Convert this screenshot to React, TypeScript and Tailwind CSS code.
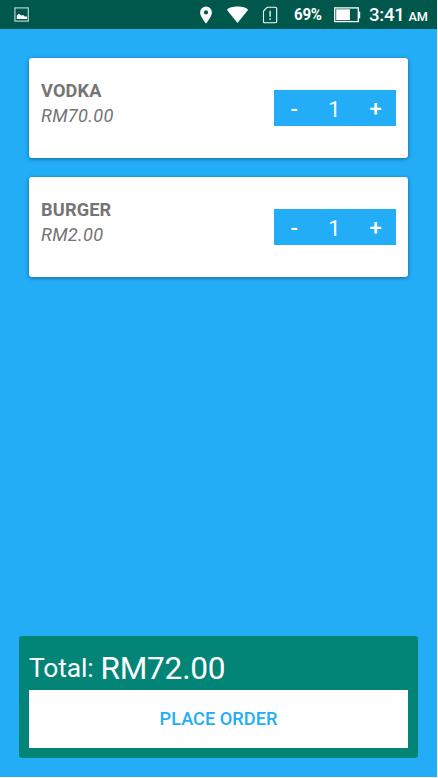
type Item = { name: string; price: string; quantity: number };

const items: Item[] = [
  { name: 'VODKA', price: 'RM70.00', quantity: 1 },
  { name: 'BURGER', price: 'RM2.00', quantity: 1 },
];

function StatusBar() {
  return (
    <header className="flex h-[29px] shrink-0 items-center bg-[#00574b] text-white">
      <svg className="ml-[14px] h-[15px] w-[15px] shrink-0" viewBox="0 0 15 15" fill="none">
        <rect x="0.9" y="0.9" width="13.4" height="13.2" stroke="#b9d3cf" strokeWidth="1.2" />
        <path d="M2.8 12V8.4L4.8 6.8 7.2 8.6l2-.5L10.7 9.6l2.3-.2V12Z" fill="white" />
      </svg>
      <svg className="ml-[171px] h-[18px] w-[12px] shrink-0" viewBox="0 0 12 18" fill="white">
        <path fillRule="evenodd" d="M6 .5A5.8 5.8 0 0 0 .1 6.4C.1 10.7 6 17.4 6 17.4s5.9-6.7 5.9-11A5.8 5.8 0 0 0 6 .5Zm0 3.8a2.1 2.1 0 1 1 0 4.2 2.1 2.1 0 0 1 0-4.2Z" />
      </svg>
      <svg className="ml-[15px] h-[17px] w-[22px] shrink-0" viewBox="0 0 22 17" fill="white">
        <path d="M0 3.9C3-.5 18-.5 21 3.9L10.5 17Z" />
      </svg>
      <svg className="ml-[13px] h-[18px] w-[16px] shrink-0" viewBox="0 0 16 18" fill="none" stroke="white">
        <path d="M5.2 1.2h8.3q1.2 0 1.2 1.2v13.2q0 1.2-1.2 1.2H2.7q-1.2 0-1.2-1.2V5Z" strokeWidth="1.1" />
        <path d="M8.1 4.8v6M8.1 12.2v1.7" strokeWidth="1.3" />
      </svg>
      <span className="ml-[16px] w-[28px] whitespace-nowrap pt-px text-[16.8px] font-bold tracking-[-0.3px]">
        <span className="inline-block origin-left scale-x-[0.9]">69%</span>
      </span>
      <svg className="ml-[12px] h-[16px] w-[27px] shrink-0" viewBox="0 0 27 16">
        <rect x="0.7" y="0.9" width="23.6" height="13.7" fill="none" stroke="white" strokeWidth="1.3" />
        <rect x="2.2" y="2.3" width="13.8" height="10.8" fill="white" />
        <path d="M24.5 4.5h1.7v6.8h-1.7Z" fill="white" />
      </svg>
      <span className="ml-[8px] flex items-baseline whitespace-nowrap pt-[3px] font-medium">
        <span className="text-[18.6px] tracking-[-0.25px]">3:41</span>
        <span className="ml-[4px] text-[12.7px] tracking-[-0.2px]">AM</span>
      </span>
    </header>
  );
}

function ItemCard({ name, price, quantity }: Item) {
  return (
    <li className="flex h-[100px] items-start justify-between rounded-[3px] bg-white pl-[12px] pr-[12px] shadow-[0_1px_4px_rgba(0,0,0,0.4)]">
      <div className="pt-[20px] text-[18.2px] leading-[25px] text-[#757575]">
        <h2 className="font-bold tracking-[0.15px]">{name}</h2>
        <p className="italic tracking-[0.3px]">{price}</p>
      </div>
      <div className="mt-[32px] grid h-[36px] w-[122px] grid-cols-3 items-center bg-[#23adf6] text-center text-[21.8px] leading-[36px] text-white">
        <button className="pt-px font-medium">-</button>
        <span className="pr-px pt-[2px]">{quantity}</span>
        <button className="font-medium">+</button>
      </div>
    </li>
  );
}

export default function App() {
  return (
    <div className="h-[778px] w-[438px] bg-white pb-px pr-px font-['Roboto',sans-serif]">
      <div className="flex h-[777px] flex-col overflow-hidden bg-[#23adf6]">
        <StatusBar />
        <ul className="flex flex-1 flex-col gap-[19px] px-[29px] pt-[29px]">
          {items.map((item) => (
            <ItemCard key={item.name} {...item} />
          ))}
        </ul>
        <footer className="mb-[19.5px] ml-[19.3px] mr-[19.5px] h-[121.5px] rounded-[3px] bg-[#028577] pl-[9.7px] pr-[9.5px]">
          <div className="flex h-[53.5px] items-start whitespace-nowrap text-white">
            <span className="pt-[12px] text-[26.4px] leading-[40px] tracking-[-0.15px]">Total:</span>
            <span className="ml-[7px] pt-[13px] text-[31.6px] leading-[40px] tracking-[-0.2px]">RM72.00</span>
          </div>
          <button className="block h-[58.5px] w-full bg-white text-[18.2px] font-medium text-[#23adf6]">
            PLACE ORDER
          </button>
        </footer>
      </div>
    </div>
  );
}
